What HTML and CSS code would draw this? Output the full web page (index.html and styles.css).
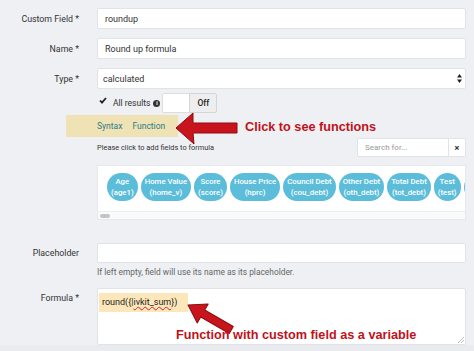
FILE: index.html
```html
<!DOCTYPE html>
<html lang="en">

<head>
  <meta charset="UTF-8" />
  <meta name="viewport" content="width=device-width, initial-scale=1.0" />
  <title>Custom Field - roundup</title>
  <link rel="stylesheet" href="styles.css">
</head>

<body>
  <div class="page">
    <div class="row">
      <label>Custom Field *</label>
      <div class="input">roundup</div>
    </div>
    <div class="row">
      <label>Name *</label>
      <div class="input">Round up formula</div>
    </div>
    <div class="row row-tight">
      <label>Type *</label>
      <div class="input select">
        <span>calculated</span>
        <svg class="select-arrow" width="5" height="9" viewBox="0 0 5 9">
          <path d="M2.5 0 L5 3.5 L0 3.5 Z M2.5 9 L5 5.5 L0 5.5 Z" fill="#222" />
        </svg>
      </div>
    </div>

    <div class="row row-check">
      <span></span>
      <div class="check-line">
        <svg class="check" width="8" height="7" viewBox="0 0 8 7">
          <path d="M1 3.5 L3 5.6 L7 1" stroke="#222" stroke-width="1.8" fill="none" />
        </svg>
        <span class="check-label">All results</span>
        <span class="info">i</span>
        <div class="toggle">
          <span class="toggle-on"></span>
          <span class="toggle-off">Off</span>
        </div>
      </div>
    </div>

    <div class="tabs">
      <span>Syntax</span>
      <span>Function</span>
    </div>

    <div class="row row-fields">
      <span></span>
      <div class="fields">
        <div class="hint-line">
          <span class="hint">Please click to add fields to formula</span>
          <div class="search">
            <span class="search-input">Search for...</span>
            <span class="search-clear">×</span>
          </div>
        </div>
        <div class="panel">
          <div class="pills">
            <span class="pill">Age<br>(age1)</span>
            <span class="pill">Home Value<br>(home_v)</span>
            <span class="pill">Score<br>(score)</span>
            <span class="pill">House Price<br>(hprc)</span>
            <span class="pill">Council Debt<br>(cou_debt)</span>
            <span class="pill">Other Debt<br>(oth_debt)</span>
            <span class="pill">Total Debt<br>(tot_debt)</span>
            <span class="pill">Test<br>(test)</span>
            <span class="pill pill-more"></span>
          </div>
          <div class="scrollbar"><span class="thumb"></span></div>
        </div>
      </div>
    </div>

    <div class="row row-placeholder">
      <label>Placeholder</label>
      <div class="input"></div>
    </div>
    <p class="help">If left empty, field will use its name as its placeholder.</p>

    <div class="row row-formula">
      <label>Formula *</label>
      <div class="textarea">
        <span class="formula">round({|<span class="typo">ivkit_sum</span>})</span>
        <svg class="resize" width="6" height="6" viewBox="0 0 6 6">
          <path d="M0 6 L6 0 M3 6 L6 3" stroke="#aaa" stroke-width="0.8" />
        </svg>
      </div>
    </div>
    <div class="bottom"></div>

    <!-- annotations drawn over the form -->
    <svg class="arrow arrow-functions" width="66" height="34" viewBox="0 0 66 34">
      <polygon points="2,16 19,1 19,11 63,11 63,21 19,21 20,32" fill="#c8141c" stroke="#8e0c10" stroke-width="1" stroke-linejoin="round" />
    </svg>
    <div class="note note-functions">Click to see functions</div>

    <svg class="arrow arrow-variable" width="60" height="42" viewBox="0 0 60 42">
      <polygon transform="translate(4,5) rotate(30)" points="0,0 17,-11 17,-4 50,-4 50,4 17,4 17,11" fill="#c8141c" stroke="#8e0c10" stroke-width="1" stroke-linejoin="round" />
    </svg>
    <div class="note note-variable">Function with custom field as a variable</div>
  </div>
</body>

</html>
```

FILE: styles.css
```css
body {
  margin: 0;
  background-color: #eef0f3;
  font-family: Roboto, "Liberation Sans", sans-serif;
  color: #333;
}

.page {
  position: relative;
  width: 474px;
  height: 351px;
  padding-top: 8px;
  box-sizing: border-box;
  overflow: hidden;
}

.row {
  display: grid;
  grid-template-columns: 79px 369px;
  column-gap: 18px;
  align-items: center;
  margin-bottom: 9px;
}

.row > * {
  min-width: 0;
}

.row label {
  text-align: right;
  font-size: 8.8px;
}

.input {
  height: 21px;
  box-sizing: border-box;
  background: white;
  border: 1px solid #e0e3e7;
  border-radius: 2px;
  padding: 0 7px;
  font-size: 9px;
  display: flex;
  align-items: center;
}

.select {
  padding-left: 5px;
  justify-content: space-between;
  padding-right: 3px;
}

.row-tight {
  margin-bottom: 4px;
}

.row-check {
  margin-bottom: 2px;
}

.check-line {
  display: flex;
  align-items: center;
  height: 20px;
}

.check {
  margin-left: 2px;
  margin-top: -5px;
}

.check-label {
  font-size: 8.5px;
  margin-left: 6px;
}

.info {
  width: 7px;
  height: 7px;
  border-radius: 50%;
  background: #333;
  color: white;
  font-size: 5.5px;
  font-weight: bold;
  line-height: 7px;
  text-align: center;
  margin-left: 3px;
}

.toggle {
  display: flex;
  height: 20px;
  margin-left: 2px;
  border-radius: 2px;
  overflow: hidden;
}

.toggle-on {
  width: 26px;
  background: white;
  border: 1px solid #ddd;
  border-right: none;
  border-radius: 2px 0 0 2px;
}

.toggle-off {
  width: 26px;
  background: #eeeeee;
  border: 1px solid #d4d4d4;
  border-radius: 0 2px 2px 0;
  font-size: 8.5px;
  font-weight: 500;
  color: #222;
  display: flex;
  align-items: center;
  justify-content: center;
}

.tabs {
  margin-left: 66px;
  width: 112px;
  height: 22px;
  box-sizing: border-box;
  padding-left: 31px;
  background: #efe3b6;
  display: flex;
  align-items: center;
  gap: 10px;
  font-size: 8.5px;
  color: #2e7a89;
  margin-bottom: 1px;
}

.row-fields {
  margin-bottom: 23px;
}

.hint-line {
  display: flex;
  justify-content: space-between;
  align-items: center;
  height: 19px;
  margin-bottom: 8px;
}

.hint {
  font-size: 7.4px;
}

.search {
  display: flex;
  height: 19px;
}

.search-input {
  width: 92px;
  box-sizing: border-box;
  background: white;
  border: 1px solid #e0e3e7;
  border-radius: 2px 0 0 2px;
  padding-left: 7px;
  font-size: 8px;
  color: #999;
  display: flex;
  align-items: center;
}

.search-clear {
  width: 17px;
  box-sizing: border-box;
  background: white;
  border: 1px solid #e0e3e7;
  border-left: none;
  border-radius: 0 2px 2px 0;
  font-size: 9px;
  font-weight: bold;
  color: #333;
  display: flex;
  align-items: center;
  justify-content: center;
}

.panel {
  background: white;
  border: 1px solid #e6e8eb;
  overflow: hidden;
}

.pills {
  display: flex;
  gap: 3px;
  padding: 7px 0 10px 9px;
  white-space: nowrap;
}

.pill {
  flex-shrink: 0;
  height: 28px;
  padding: 0 4px;
  border-radius: 14px;
  background: #5bbdd9;
  color: white;
  font-size: 7.8px;
  font-weight: 500;
  line-height: 11px;
  text-align: center;
  display: flex;
  align-items: center;
}

.pill-more {
  width: 40px;
}

.scrollbar {
  height: 8px;
  border-top: 1px solid #eceef0;
  background: #fafafa;
  padding: 2px 0 0 2px;
  box-sizing: border-box;
}

.thumb {
  display: block;
  width: 10px;
  height: 4px;
  border-radius: 2px;
  background: #c4c4c4;
}

.row-placeholder {
  margin-bottom: 0;
}

.row-placeholder .input {
  height: 20px;
}

.help {
  margin: 4px 0 11px 97px;
  font-size: 8.4px;
  line-height: 10px;
  color: #666;
}

.row-formula {
  margin-bottom: 0;
  align-items: start;
}

.row-formula label {
  padding-top: 5px;
}

.textarea {
  position: relative;
  height: 57px;
  box-sizing: border-box;
  background: white;
  border: 1px solid #e0e3e7;
  border-radius: 2px;
  padding: 1px;
}

.formula {
  display: inline-block;
  width: 89px;
  height: 19px;
  box-sizing: border-box;
  padding-left: 3px;
  background: #fbe7b9;
  font-size: 9px;
  line-height: 19px;
  color: #222;
}

.typo {
  text-decoration: underline wavy #d0242a;
  text-decoration-thickness: 1px;
  text-underline-offset: 1px;
}

.resize {
  position: absolute;
  right: 1px;
  bottom: 1px;
}

.bottom {
  height: 6px;
  background: #e9ebee;
}

.arrow {
  position: absolute;
}

.arrow-functions {
  left: 174px;
  top: 112px;
}

.arrow-variable {
  left: 184px;
  top: 300px;
}

.note {
  position: absolute;
  font-family: "Liberation Sans", Arial, sans-serif;
  font-weight: bold;
  font-size: 12.7px;
  line-height: 15px;
  color: #c0121a;
  white-space: nowrap;
}

.note-functions {
  left: 245px;
  top: 120px;
}

.note-variable {
  left: 176px;
  top: 328px;
}
```
